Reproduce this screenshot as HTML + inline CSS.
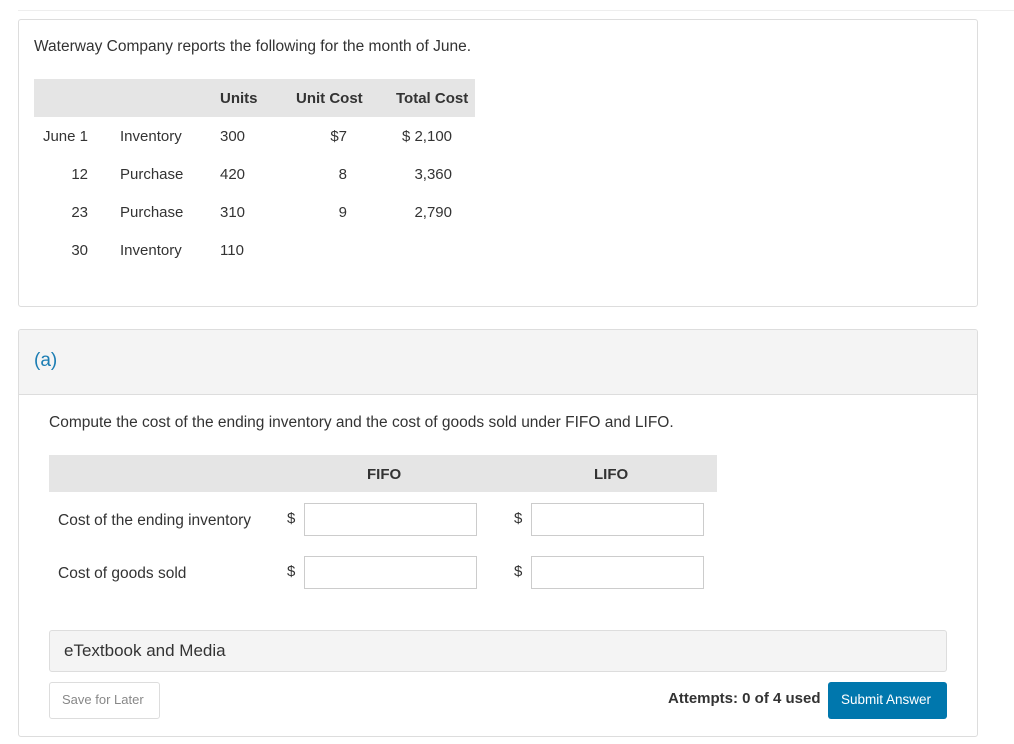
<!DOCTYPE html>
<html><head><meta charset="utf-8"><style>
*{margin:0;padding:0;box-sizing:border-box}
body{width:1014px;height:744px;background:#fff;font-family:"Liberation Sans",sans-serif;color:#333;position:relative;overflow:hidden;font-size:15px}
.a{position:absolute;white-space:nowrap}
.card{position:absolute;border:1px solid #ddd;border-radius:3px;background:#fff}
.inp{position:absolute;width:173px;height:33px;border:1px solid #ccc;background:#fff}
.r{text-align:right}
</style></head><body>
<div class="a" style="left:18px;top:10px;width:996px;height:1px;background:#eee"></div>
<div class="card" style="left:18px;top:19px;width:960px;height:288px"></div>
<div class="a" style="left:34px;top:38px;font-size:15.5px">Waterway Company reports the following for the month of June.</div>
<div class="a" style="left:34px;top:79px;width:441px;height:38px;background:#e5e5e5"></div>
<div class="a" style="left:220px;top:90px;font-weight:bold">Units</div>
<div class="a" style="left:296px;top:90px;font-weight:bold">Unit Cost</div>
<div class="a" style="left:396px;top:90px;font-weight:bold">Total Cost</div>

<div class="a r" style="left:30px;width:58px;top:128px">June 1</div>
<div class="a r" style="left:30px;width:58px;top:166px">12</div>
<div class="a r" style="left:30px;width:58px;top:204px">23</div>
<div class="a r" style="left:30px;width:58px;top:242px">30</div>
<div class="a" style="left:120px;top:128px">Inventory</div>
<div class="a" style="left:120px;top:166px">Purchase</div>
<div class="a" style="left:120px;top:204px">Purchase</div>
<div class="a" style="left:120px;top:242px">Inventory</div>
<div class="a" style="left:220px;top:128px">300</div>
<div class="a" style="left:220px;top:166px">420</div>
<div class="a" style="left:220px;top:204px">310</div>
<div class="a" style="left:220px;top:242px">110</div>
<div class="a r" style="left:300px;width:47px;top:128px">$7</div>
<div class="a r" style="left:300px;width:47px;top:166px">8</div>
<div class="a r" style="left:300px;width:47px;top:204px">9</div>
<div class="a r" style="left:380px;width:72px;top:128px">$ 2,100</div>
<div class="a r" style="left:380px;width:72px;top:166px">3,360</div>
<div class="a r" style="left:380px;width:72px;top:204px">2,790</div>

<div class="card" style="left:18px;top:329px;width:960px;height:408px;overflow:hidden">
<div style="position:absolute;left:0;top:0;width:100%;height:65px;background:#f4f4f4;border-bottom:1px solid #ddd"></div>
</div>
<div class="a" style="left:34px;top:350px;font-size:19px;color:#1b7db3">(a)</div>
<div class="a" style="left:49px;top:414px;font-size:15.5px">Compute the cost of the ending inventory and the cost of goods sold under FIFO and LIFO.</div>
<div class="a" style="left:49px;top:455px;width:668px;height:37px;background:#e5e5e5"></div>
<div class="a" style="left:367px;top:466px;font-weight:bold">FIFO</div>
<div class="a" style="left:594px;top:466px;font-weight:bold">LIFO</div>
<div class="a" style="left:58px;top:512px;font-size:15.5px">Cost of the ending inventory</div>
<div class="a" style="left:58px;top:565px;font-size:15.5px">Cost of goods sold</div>
<div class="a" style="left:287px;top:510px">$</div>
<div class="a" style="left:287px;top:563px">$</div>
<div class="a" style="left:514px;top:510px">$</div>
<div class="a" style="left:514px;top:563px">$</div>
<div class="inp" style="left:304px;top:503px"></div>
<div class="inp" style="left:531px;top:503px"></div>
<div class="inp" style="left:304px;top:556px"></div>
<div class="inp" style="left:531px;top:556px"></div>
<div class="a" style="left:49px;top:630px;width:898px;height:42px;background:#f4f4f4;border:1px solid #ddd;border-radius:3px"></div>
<div class="a" style="left:64px;top:641px;font-size:17px">eTextbook and Media</div>
<div class="a" style="left:49px;top:682px;width:111px;height:37px;border:1px solid #ddd;border-radius:3px"></div>
<div class="a" style="left:62px;top:692px;font-size:13px;color:#888">Save for Later</div>
<div class="a" style="left:668px;top:690px;font-weight:bold">Attempts: 0 of 4 used</div>
<div class="a" style="left:828px;top:682px;width:119px;height:37px;background:#0077ad;border-radius:3px"></div>
<div class="a" style="left:841px;top:692px;font-size:13.5px;color:#fff">Submit Answer</div>
</body></html>
